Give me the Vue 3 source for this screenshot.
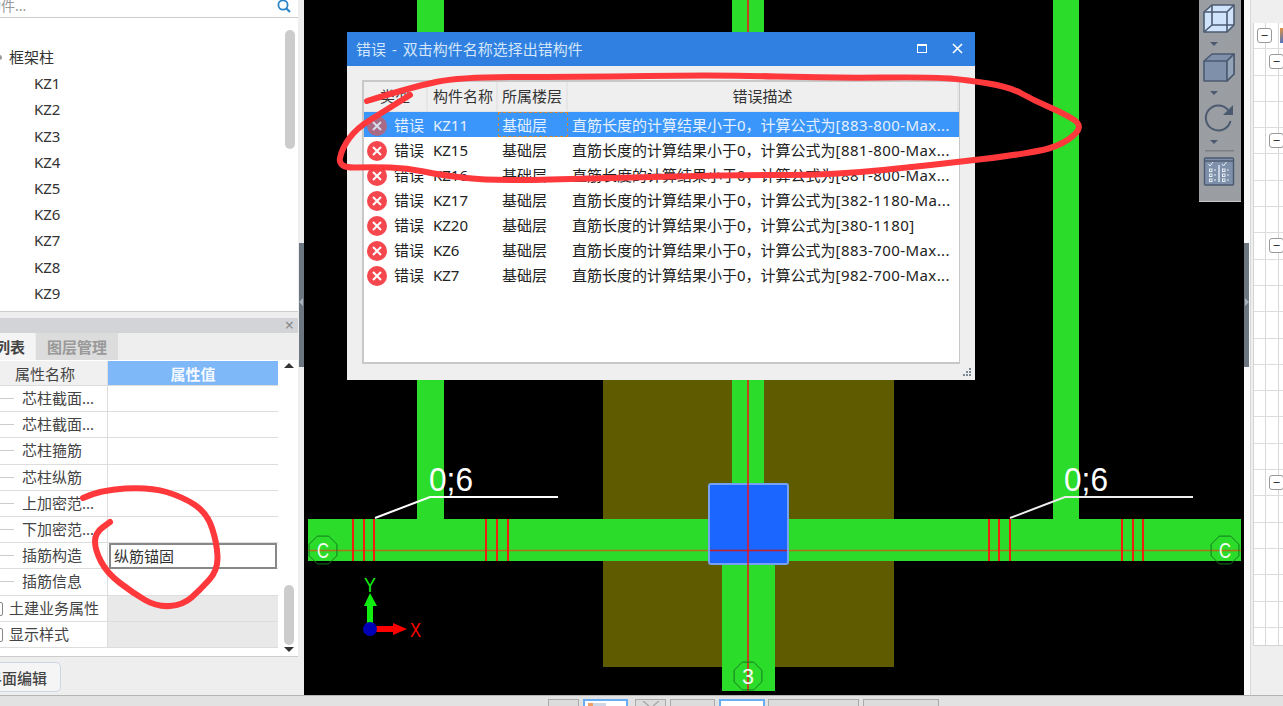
<template>
  <div class="app">
    <div class="main">
      <!-- left side: component tree and properties -->
      <aside class="left">
        <div class="search">
          <span class="search-text">构件...</span>
          <svg class="search-icon" width="14" height="14" viewBox="0 0 14 14">
            <circle cx="6" cy="5" r="4.6" fill="none" stroke="#2a86c8" stroke-width="1.8" />
            <path d="M9.5 8.5 L13 12" stroke="#2a86c8" stroke-width="2.2" />
          </svg>
        </div>
        <div class="tree">
          <div class="tree-row parent"><i class="dot"></i>框架柱</div>
          <div v-for="k in treeItems" :key="k" class="tree-row child">{{ k }}</div>
          <div class="tree-thumb"></div>
        </div>
        <div class="panel-head"><span class="panel-x">×</span></div>
        <div class="tabs">
          <div class="tab on"><span class="tab-clip">构件列表</span></div>
          <div class="tab off">图层管理</div>
        </div>
        <div class="props">
          <div class="prop-table">
            <div class="prop-row head">
              <div class="name">属性名称</div>
              <div class="val">属性值</div>
            </div>
            <div v-for="p in props" :key="p.id" class="prop-row" :class="{ group: p.group }">
              <div class="name"><i v-if="!p.group" class="tick"></i><i v-else class="fold"></i>{{ p.label }}</div>
              <div class="val"><span v-if="p.value" class="editor">{{ p.value }}</span></div>
            </div>
          </div>
          <div class="prop-scroll">
            <i class="arrow up"></i>
            <div class="prop-thumb"></div>
            <i class="arrow down"></i>
          </div>
        </div>
        <div class="foot"><button class="edit-btn"><span>界面编辑</span></button></div>
        <div class="handle"><i class="handle-tip left-tip"></i></div>
      </aside>

      <!-- drawing canvas, page coordinates through the viewBox -->
      <section class="canvas">
        <svg class="drawing" width="940" height="695" viewBox="304 0 940 695">
          <rect x="603" y="380" width="291" height="287" fill="#5f5b00" />
          <g fill="#2bdc2b">
            <rect x="417" y="0" width="27" height="520" />
            <rect x="732" y="0" width="32" height="500" />
            <rect x="1053" y="0" width="26" height="520" />
            <rect x="722" y="560" width="53" height="131" />
            <rect x="308" y="519" width="933" height="42" />
          </g>
          <line x1="308" y1="550.5" x2="1241" y2="550.5" stroke="#b0701c" stroke-width="1.5" />
          <g stroke="#f02010" stroke-width="2">
            <line v-for="x in stirrups" :key="x" :x1="x" :x2="x" y1="519" y2="561" />
          </g>
          <rect x="709" y="484" width="79" height="80" rx="2" fill="#1a66ff" stroke="#76a2f2" stroke-width="2" />
          <line x1="710" y1="550.5" x2="787" y2="550.5" stroke="#c02030" stroke-width="1.5" />
          <line x1="748" y1="0" x2="748" y2="691" stroke="#f0141c" stroke-width="1.5" />
          <g fill="none" stroke="#fff" stroke-width="2">
            <path d="M375 518 L430 497 H558" />
            <path d="M1010 518 L1065 497 H1193" stroke="#eee" />
          </g>
          <g class="dim" fill="#fff">
            <text x="429" y="491" textLength="44" lengthAdjust="spacingAndGlyphs">0;6</text>
            <text x="1064" y="491" textLength="44" lengthAdjust="spacingAndGlyphs">0;6</text>
          </g>
          <g v-for="a in axisMarks" :key="a.x" class="axis-mark">
            <polygon :points="octagon(a.x, a.y)" fill="none" stroke="#127a1e" stroke-width="1" />
            <text :x="a.x - 6" :y="a.y + 8" textLength="12" lengthAdjust="spacingAndGlyphs" fill="#f4fff4">{{ a.t }}</text>
          </g>
          <!-- origin widget -->
          <path d="M367 629 V606 H364 L370 593 L377 606 H373 V629 Z" fill="#10ee10" />
          <path d="M370 626 H393 V623 L407 629 L393 635 V632 H370 Z" fill="#ff0000" />
          <circle cx="370" cy="629" r="7" fill="#0000b4" />
          <text class="axis-label" x="364" y="592" textLength="12" lengthAdjust="spacingAndGlyphs" fill="#10ee10">Y</text>
          <text class="axis-label" x="410" y="637" textLength="11" lengthAdjust="spacingAndGlyphs" fill="#ff0000">X</text>
        </svg>

        <div class="viewbar">
          <svg width="42" height="201" viewBox="0 0 42 201">
            <g stroke="#4c5a70" stroke-width="1.6" stroke-linejoin="round">
              <path d="M5 12 L13 5 H35 V25 L28 32 H5 Z" fill="#cfe4fb" />
              <path d="M5 12 H28 V32 M28 12 L35 5 M13 5 V25 H35 M13 25 L5 32" fill="none" />
              <path d="M5 61 L13 54 H35 V74 L28 81 H5 Z" fill="#7e90aa" />
              <path d="M5 61 H28 V81 M28 61 L35 54" fill="none" />
              <path d="M28 61 L35 54 V74 L28 81 Z" fill="#93a3b8" />
            </g>
            <path d="M29 110 A12.5 12.5 0 1 0 31.5 121" fill="none" stroke="#4c5a70" stroke-width="2" />
            <path d="M34 105 V115 H24 Z" fill="#4c5a70" />
            <g fill="#4c5a70">
              <path d="M11 42 H19 L15 46 Z" />
              <path d="M11 91 H19 L15 95 Z" />
              <path d="M11 140 H19 L15 144 Z" />
            </g>
            <rect x="6" y="150" width="29" height="1.5" fill="#7c8085" />
            <rect x="5.500" y="158" width="29" height="27" rx="1" fill="#7e90aa" stroke="#4c5a70" stroke-width="1.4" />
            <path d="M6 161 H34" stroke="#4c5a70" stroke-width="1.400" />
            <path d="M20 165 V182" stroke="#e6edf5" stroke-width="1.4" />
            <g fill="none" stroke="#e6edf5" stroke-width="1">
              <rect v-for="c in checkCells" :key="c.id" :x="c.x" :y="c.y" width="2.500" height="2.500" />
              <path d="M15 170 H17 M15 175 H17 M15 180 H17 M28 170 H30 M28 175 H30 M28 180 H30" />
              <path d="M9.500 164 L11 166 L14 162 M23 164 L24.500 166 L27.500 162" />
            </g>
          </svg>
        </div>

        <!-- error dialog -->
        <div class="dialog">
          <div class="dialog-title">
            <span>错误 - 双击构件名称选择出错构件</span>
            <div class="dialog-btns">
              <i class="max"></i>
              <svg width="11" height="11" viewBox="0 0 11 11"><path d="M1 1 L10 10 M10 1 L1 10" stroke="#fff" stroke-width="1.6" /></svg>
            </div>
          </div>
          <div class="dialog-body">
            <div class="grid">
              <div class="grid-row grid-head">
                <div class="c1 center">类型</div>
                <div class="c2">构件名称</div>
                <div class="c3">所属楼层</div>
                <div class="c4 center">错误描述</div>
              </div>
              <div v-for="(e, i) in errors" :key="e.name" class="grid-row" :class="{ selected: i === 0 }">
                <div class="c1">
                  <svg width="20" height="20" viewBox="0 0 20 20">
                    <circle cx="10" cy="10" r="10" :fill="i === 0 ? '#a86a84' : '#f4474e'" />
                    <path d="M6 6 L14 14 M14 6 L6 14" :stroke="i === 0 ? '#d8dcec' : '#fff'" stroke-width="2" />
                  </svg>
                  <span>错误</span>
                </div>
                <div class="c2">{{ e.name }}</div>
                <div class="c3"><span :class="{ focus: i === 0 }">基础层</span></div>
                <div class="c4">直筋长度的计算结果小于0，计算公式为<span class="formula">{{ e.formula }}</span></div>
              </div>
            </div>
          </div>
          <svg class="grip" width="10" height="10" viewBox="0 0 10 10">
            <g fill="#7c8894">
              <rect x="7" y="1" width="2" height="2" /><rect x="4" y="4" width="2" height="2" /><rect x="7" y="4" width="2" height="2" />
              <rect x="1" y="7" width="2" height="2" /><rect x="4" y="7" width="2" height="2" /><rect x="7" y="7" width="2" height="2" />
            </g>
          </svg>
        </div>
      </section>

      <!-- right side: property tree -->
      <aside class="right">
        <div class="handle-r"><i class="handle-tip right-tip"></i></div>
        <div class="right-inner">
          <div class="right-table">
            <div v-for="r in rightRows" :key="r.id" class="right-row">
              <span v-if="r.box === 1" class="minus first">−</span>
              <span v-if="r.box === 1" class="mini-icon"></span>
              <span v-if="r.box === 2" class="minus second">−</span>
            </div>
          </div>
        </div>
      </aside>
    </div>

    <div class="bottom">
      <div v-for="t in bottomTabs" :key="t.x" class="bottom-tab" :class="{ active: t.on }" :style="{ width: t.w + 'px', marginLeft: t.gap + 'px' }">
        <i v-if="t.icon" class="folder"></i>
        <svg v-if="t.cross" class="cross" width="20" height="6" viewBox="0 0 20 6"><path d="M2 0 L8 5 M18 0 L12 5" stroke="#aaa" stroke-width="1.500" /></svg>
      </div>
    </div>

    <!-- hand drawn marks -->
    <svg class="marks" width="1283" height="706" viewBox="0 0 1283 706">
      <path :d="smooth(bigLoop)" />
      <path :d="smooth(smallLoop)" />
    </svg>
  </div>
</template>

<script setup>
const treeItems = ['KZ1', 'KZ2', 'KZ3', 'KZ4', 'KZ5', 'KZ6', 'KZ7', 'KZ8', 'KZ9']

const props = [
  { id: 1, label: '芯柱截面...' },
  { id: 2, label: '芯柱截面...' },
  { id: 3, label: '芯柱箍筋' },
  { id: 4, label: '芯柱纵筋' },
  { id: 5, label: '上加密范...' },
  { id: 6, label: '下加密范...' },
  { id: 7, label: '插筋构造', value: '纵筋锚固' },
  { id: 8, label: '插筋信息' },
  { id: 9, label: '土建业务属性', group: true },
  { id: 10, label: '显示样式', group: true }
]

const errors = [
  { name: 'KZ11', formula: '[883-800-Max...' },
  { name: 'KZ15', formula: '[881-800-Max...' },
  { name: 'KZ16', formula: '[881-800-Max...' },
  { name: 'KZ17', formula: '[382-1180-Ma...' },
  { name: 'KZ20', formula: '[380-1180]' },
  { name: 'KZ6', formula: '[883-700-Max...' },
  { name: 'KZ7', formula: '[982-700-Max...' }
]

const stirrups = [353, 364, 374, 486, 497, 508, 989, 999, 1010, 1122, 1133, 1143]

const axisMarks = [
  { x: 323, y: 550, t: 'C' },
  { x: 1225, y: 550, t: 'C' },
  { x: 748, y: 676, t: '3' }
]

const checkCells = []
for (const x of [10.5, 23.5]) {
  for (const y of [169, 174, 179]) {
    checkCells.push({ id: x + '-' + y, x, y })
  }
}

const boxRows = { 0: 1, 1: 2, 4: 2, 8: 2, 17: 2 }
const rightRows = Array.from({ length: 24 }, (_, i) => ({ id: i, box: boxRows[i] }))

const bottomTabs = [
  { x: 1, w: 31, gap: 548 },
  { x: 2, w: 45, gap: 4, on: true, icon: true },
  { x: 3, w: 31, gap: 7, cross: true },
  { x: 4, w: 45, gap: 4 },
  { x: 5, w: 46, gap: 4, on: true },
  { x: 6, w: 91, gap: 3 },
  { x: 7, w: 76, gap: 4 }
]

const bigLoop = [
  [367, 101], [412, 87], [460, 77], [573, 77], [723, 75], [833, 78], [933, 77], [967, 80],
  [1010, 87], [1033, 100], [1063, 113], [1084, 126], [1064, 144], [1033, 153], [933, 165],
  [833, 175], [740, 175], [607, 178], [493, 181], [440, 175], [407, 168], [373, 167],
  [338, 168], [342, 148], [357, 128], [383, 112], [410, 95]
]

const smallLoop = [
  [83, 498], [100, 490], [150, 487], [183, 497], [207, 513], [217, 543], [218, 570],
  [200, 590], [183, 605], [157, 607], [133, 593], [107, 573], [95, 550], [95, 533], [110, 522]
]

function smooth(pts) {
  let d = `M${pts[0][0]} ${pts[0][1]}`
  for (let i = 1; i < pts.length - 1; i++) {
    const mx = (pts[i][0] + pts[i + 1][0]) / 2
    const my = (pts[i][1] + pts[i + 1][1]) / 2
    d += ` Q${pts[i][0]} ${pts[i][1]} ${mx} ${my}`
  }
  const last = pts[pts.length - 1]
  return d + ` L${last[0]} ${last[1]}`
}

function octagon(cx, cy) {
  const out = []
  for (let i = 0; i < 8; i++) {
    const a = (Math.PI * 2 * i) / 8 + Math.PI / 8
    out.push((cx + 15 * Math.cos(a)).toFixed(1) + ',' + (cy + 15 * Math.sin(a)).toFixed(1))
  }
  return out.join(' ')
}
</script>

<style>
html, body {
  margin: 0;
  overflow: hidden;
}
</style>

<style scoped>
.app {
  position: relative;
  width: 1283px;
  height: 706px;
  overflow: hidden;
  background: #eee;
  font-family: "Noto Sans", "Noto Sans CJK SC", sans-serif;
  font-size: 15px;
  color: #333;
}
.main {
  display: flex;
  height: 695px;
}

/* left */
.left {
  position: relative;
  width: 304px;
  flex: none;
  display: flex;
  flex-direction: column;
  background: #eee;
  overflow: hidden;
}
.search {
  position: relative;
  width: 298px;
  height: 17px;
  background: #fff;
  border-bottom: 1px solid #ccc;
  box-sizing: content-box;
  overflow: hidden;
}
.search-text {
  display: block;
  margin-left: -13px;
  margin-top: -4px;
  font-size: 14px;
  color: #999;
  line-height: 20px;
}
.search-icon {
  position: absolute;
  right: 7px;
  top: 0;
}
.tree {
  position: relative;
  width: 298px;
  height: 294px;
  padding-top: 26px;
  box-sizing: border-box;
  background: #fff;
  border-bottom: 1px solid #ccc;
}
.tree-row {
  height: 26.2px;
  line-height: 27px;
}
.parent {
  padding-left: 9px;
}
.dot {
  position: absolute;
  left: -3px;
  top: 37px;
  width: 5px;
  height: 5px;
  border-radius: 50%;
  background: #999;
}
.child {
  padding-left: 34px;
}
.tree-thumb {
  position: absolute;
  left: 285px;
  top: 12px;
  width: 10px;
  height: 119px;
  border-radius: 5px;
  background: #ccc;
}
.panel-head {
  position: relative;
  width: 298px;
  height: 15px;
  margin-top: 6px;
  background: #d2d4d8;
}
.panel-x {
  position: absolute;
  right: 4px;
  top: -3px;
  font-size: 16px;
  line-height: 20px;
  color: #888;
}
.tabs {
  display: flex;
  height: 27px;
  width: 298px;
  font-weight: 700;
}
.tab {
  line-height: 28px;
  box-sizing: border-box;
  overflow: hidden;
  white-space: nowrap;
}
.tab.on {
  width: 35px;
  background: #f4f4f4;
  color: #444;
}
.tab-clip {
  display: block;
  margin-left: -35px;
}
.tab.off {
  width: 82px;
  margin-left: 1px;
  padding-left: 11px;
  background: #dcdcdc;
  color: #999;
}
.props {
  display: flex;
  width: 298px;
  height: 297px;
  padding-top: 1px;
  box-sizing: border-box;
  background: #fff;
  border-bottom: 1px solid #ccc;
}
.prop-table {
  width: 278px;
  flex: none;
}
.prop-row {
  display: flex;
  height: 26.2px;
  box-sizing: border-box;
  border-bottom: 1px solid #ddd;
  line-height: 25px;
}
.prop-row .name {
  width: 108px;
  flex: none;
  box-sizing: border-box;
  padding-left: 22px;
  border-right: 1px solid #ddd;
  position: relative;
  white-space: nowrap;
  color: #444;
}
.prop-row .val {
  flex: 1;
  position: relative;
}
.prop-row.head {
  height: 25px;
  line-height: 26px;
}
.prop-row.head .name {
  padding-left: 15px;
  background: #f0f0f0;
}
.prop-row.head .val {
  background: #7fb8f8;
  color: #f4f9ff;
  text-align: center;
  font-weight: 700;
}
.prop-row.group .name {
  padding-left: 9px;
}
.prop-row.group .val {
  background: #e9e9e9;
}
.tick {
  position: absolute;
  left: 0;
  top: 12px;
  width: 14px;
  height: 1px;
  background: #ccc;
}
.fold {
  position: absolute;
  left: -5px;
  top: 6px;
  width: 6px;
  height: 12px;
  border: 1px solid #888;
  border-radius: 2px;
}
.editor {
  position: absolute;
  left: 1px;
  top: 0;
  width: 168px;
  height: 26px;
  box-sizing: border-box;
  border: 2px solid #888;
  padding-left: 3px;
  line-height: 22px;
  background: #fff;
}
.prop-scroll {
  position: relative;
  flex: 1;
}
.arrow {
  position: absolute;
  left: 6px;
  width: 0;
  height: 0;
  border-left: 5px solid transparent;
  border-right: 5px solid transparent;
}
.arrow.up {
  top: 2px;
  border-bottom: 5px solid #333;
}
.arrow.down {
  top: 286px;
  border-top: 5px solid #333;
}
.prop-thumb {
  position: absolute;
  left: 6px;
  top: 224px;
  width: 10px;
  height: 60px;
  border-radius: 5px;
  background: #ccc;
}
.foot {
  flex: 1;
  width: 298px;
  padding-top: 5px;
  overflow: hidden;
}
.edit-btn {
  display: block;
  width: 75px;
  height: 30px;
  margin-left: -14px;
  padding: 0;
  border: 1px solid #ccd6e6;
  border-radius: 5px;
  background: #f5f5f5;
  font: inherit;
  font-weight: 500;
  color: #444;
  text-align: left;
}
.handle {
  position: absolute;
  left: 299px;
  top: 243px;
  width: 5px;
  height: 124px;
  background: #6b7680;
}
.handle-tip {
  position: absolute;
  top: 55px;
  width: 0;
  height: 0;
  border-top: 4px solid transparent;
  border-bottom: 4px solid transparent;
}
.left-tip {
  left: 0;
  border-right: 4px solid #a8b0b8;
}
.right-tip {
  left: 1px;
  border-left: 4px solid #a8b0b8;
}

/* canvas */
.canvas {
  position: relative;
  width: 940px;
  flex: none;
  background: #000;
  overflow: hidden;
}
.drawing {
  display: block;
}
.dim {
  font-family: "Liberation Sans", sans-serif;
  font-size: 33px;
}
.axis-mark {
  font-family: "Liberation Sans", sans-serif;
  font-size: 22px;
}
.axis-label {
  font-family: "Liberation Sans", sans-serif;
  font-size: 20px;
}
.viewbar {
  position: absolute;
  left: 895px;
  top: 0;
  width: 42px;
  height: 201px;
  background: #9a9ea3;
  border-bottom: 1px solid #c8c8c8;
}
.viewbar svg {
  display: block;
}
.dialog {
  position: absolute;
  left: 43px;
  top: 32px;
  width: 628px;
  height: 348px;
  background: #efefef;
}
.dialog-title {
  display: flex;
  align-items: center;
  justify-content: space-between;
  height: 34px;
  padding: 0 12px 2px 9px;
  box-sizing: border-box;
  background: #2f80e0;
  color: #d4e6fa;
  word-spacing: 2px;
}
.dialog-btns {
  display: flex;
  align-items: center;
  gap: 25px;
}
.max {
  width: 8px;
  height: 6px;
  border: 1px solid #fff;
  border-top-width: 2px;
}
.dialog-body {
  padding: 14px 15px 0;
}
.grid {
  height: 284px;
  box-sizing: border-box;
  border: 2px solid #c8c8c8;
  border-width: 2px 1px 2px 2px;
  background: #fff;
}
.grid-row {
  display: grid;
  grid-template-columns: 64px 70px 70px 1fr;
  height: 25px;
  line-height: 27px;
  box-sizing: border-box;
  white-space: nowrap;
  color: #222;
}
.grid-head {
  height: 30px;
  line-height: 29px;
  background: #efefef;
  border-bottom: 1px solid #e4e4e4;
  color: #333;
}
.grid-head > div {
  border-right: 2px solid #e6e6e6;
}
.selected {
  background: #3a96fa;
  color: #e4f0fe;
}
.c1 {
  display: flex;
  align-items: center;
  gap: 7px;
  padding-left: 3px;
}
.c1 svg {
  margin-bottom: 0;
}
.c1 span {
  line-height: 27px;
}
.grid-head .c1.center {
  justify-content: center;
  padding-left: 0;
}
.c2 {
  padding-left: 5px;
  overflow: hidden;
}
.c3 {
  padding-left: 4px;
}
.focus {
  display: block;
  height: 25px;
  margin-left: -4px;
  padding-left: 4px;
  box-sizing: border-box;
  outline: 1px dashed #d08830;
  outline-offset: -1px;
}
.c4 {
  padding-left: 4px;
  overflow: hidden;
}
.c4.center {
  text-align: center;
  padding-left: 0;
}
.formula {
  letter-spacing: 0.42px;
}
.grip {
  position: absolute;
  right: 3px;
  bottom: 3px;
}

/* right */
.right {
  position: relative;
  flex: 1;
  background: #fafafa;
  overflow: hidden;
}
.handle-r {
  position: absolute;
  left: 0;
  top: 243px;
  width: 5px;
  height: 124px;
  background: #6b7680;
}
.right-inner {
  height: 100%;
  margin-left: 6px;
  padding: 23px 0 0 2px;
  box-sizing: border-box;
  background: #efefef;
  border-left: 1px solid #d8d8d8;
}
.right-table {
  width: 60px;
  height: 623px;
  overflow: hidden;
  background: #fff;
  border: 1px solid #d4d4d4;
  border-top: none;
  box-sizing: border-box;
  background-image: linear-gradient(#d8d8d8, #d8d8d8), linear-gradient(#d8d8d8, #d8d8d8);
  background-size: 1px 100%, 1px 100%;
  background-position: 11px 0, 24px 0;
  background-repeat: no-repeat;
}
.right-row {
  position: relative;
  height: 26.3px;
  box-sizing: border-box;
  border-bottom: 1px solid #ddd;
}
.minus {
  position: absolute;
  z-index: 1;
  width: 15px;
  height: 15px;
  box-sizing: border-box;
  border: 1px solid #999;
  border-radius: 3px;
  background: #fff;
  font-size: 13px;
  line-height: 12px;
  text-align: center;
  color: #333;
}
.minus.first {
  left: 3px;
  top: 5px;
}
.minus.second {
  left: 15px;
  top: 5px;
}
.mini-icon {
  position: absolute;
  left: 26px;
  top: 5px;
  width: 4px;
  height: 15px;
  background: linear-gradient(135deg, #e8953a, #3a6fd0);
}

/* bottom */
.bottom {
  display: flex;
  height: 11px;
  padding-top: 3px;
  box-sizing: border-box;
  background: #e2e2e2;
  border-top: 1px solid #b4b4b4;
  overflow: hidden;
}
.bottom-tab {
  flex: none;
  height: 12px;
  box-sizing: border-box;
  border: 1px solid #aaa;
  border-bottom: none;
  background: #dcdcdc;
  position: relative;
}
.bottom-tab.active {
  border: 2px solid #69aef5;
  background: #fff;
}
.folder {
  position: absolute;
  left: 3px;
  top: 2px;
  width: 18px;
  height: 6px;
  background: linear-gradient(90deg, #f0a060 30%, #d0d8e8 30%);
}
.cross {
  position: absolute;
  left: 5px;
  top: 1px;
}

/* scribbles */
.marks {
  position: absolute;
  left: 0;
  top: 0;
  pointer-events: none;
}
.marks path {
  fill: none;
  stroke: #ff383c;
  stroke-width: 6;
  stroke-linecap: round;
  stroke-linejoin: round;
}
</style>
